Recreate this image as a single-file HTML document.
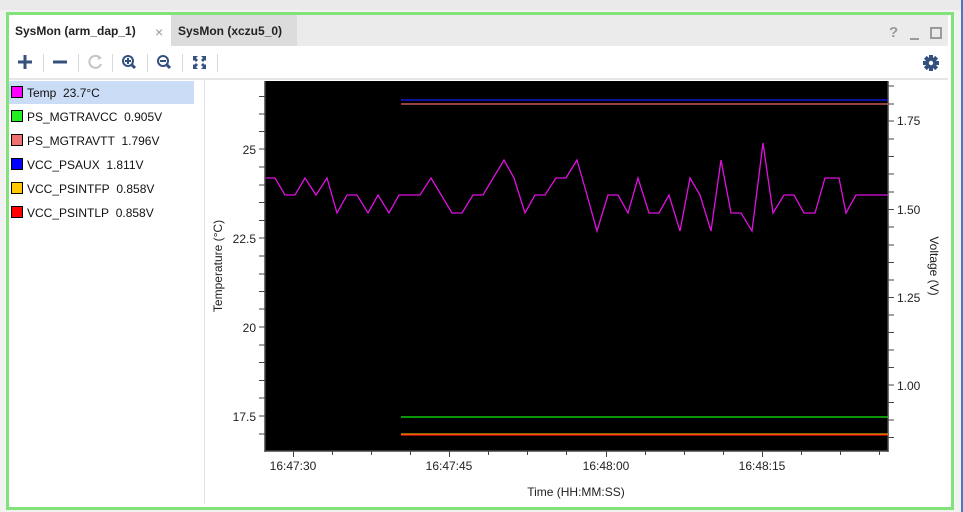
<!DOCTYPE html>
<html><head><meta charset="utf-8"><style>
html,body{margin:0;padding:0;width:963px;height:512px;overflow:hidden;background:#f2f2f2;font-family:"Liberation Sans",Arial,sans-serif;}
.a{position:absolute}
</style></head><body>
<div class="a" style="left:0;top:0;width:963px;height:10px;background:#eaeaea"></div>
<div class="a" style="left:961px;top:0;width:2px;height:512px;background:#4a78c8"></div>
<div class="a" style="left:6px;top:12px;width:942px;height:492px;border:3px solid #82e37a;background:#fff"></div>
<div class="a" style="left:9px;top:15px;width:939px;height:31px;background:#ebebeb"></div>
<div class="a" style="left:9px;top:15px;width:162px;height:31px;background:#fff"></div>
<div class="a" style="left:171px;top:15px;width:126px;height:31px;background:#dcdcdc"></div>
<div class="a" style="left:15px;top:24px;font-size:12px;font-weight:bold;color:#222">SysMon (arm_dap_1)</div>
<div class="a" style="left:155px;top:24px;font-size:14px;color:#999">×</div>
<div class="a" style="left:178px;top:24px;font-size:12px;font-weight:bold;color:#222">SysMon (xczu5_0)</div>
<div class="a" style="left:889px;top:24px;font-size:15px;font-weight:bold;color:#9a9a9a">?</div>
<div class="a" style="left:910px;top:38px;width:9px;height:2px;background:#9a9a9a"></div>
<div class="a" style="left:930px;top:27px;width:8px;height:8px;border:2px solid #9a9a9a"></div>
<div class="a" style="left:9px;top:78px;width:939px;height:2px;background:#e6e6e6"></div>
<svg class="a" style="left:0;top:0" width="963" height="512">
<g stroke="#d8d8d8" stroke-width="1">
<line x1="43.5" y1="54" x2="43.5" y2="72"/><line x1="78.5" y1="54" x2="78.5" y2="72"/><line x1="112.5" y1="54" x2="112.5" y2="72"/><line x1="147.5" y1="54" x2="147.5" y2="72"/><line x1="182.5" y1="54" x2="182.5" y2="72"/><line x1="217.5" y1="54" x2="217.5" y2="72"/>
</g>
<g stroke="#34507f" stroke-width="3" fill="none">
<line x1="18" y1="62" x2="32" y2="62"/><line x1="25" y1="55" x2="25" y2="69"/>
<line x1="53" y1="62" x2="67" y2="62"/>
</g>
<path d="M100 58 A6 6 0 1 0 101 64" stroke="#c4c4c4" stroke-width="2" fill="none"/>
<path d="M98 55 L102 58 L98 60" fill="#c4c4c4"/>
<g stroke="#34507f" stroke-width="2" fill="none">
<circle cx="128" cy="61" r="5"/><line x1="132" y1="65" x2="135" y2="68" stroke-width="3"/>
<line x1="125" y1="61" x2="131" y2="61"/><line x1="128" y1="58" x2="128" y2="64"/>
<circle cx="163" cy="61" r="5"/><line x1="167" y1="65" x2="170" y2="68" stroke-width="3"/>
<line x1="160" y1="61" x2="166" y2="61"/>
</g>
<g fill="#34507f">
<path d="M193 56h5l-2 2 2 2-2 2-2-2-1 1z"/><path d="M206 56h-5l2 2-2 2 2 2 2-2 1 1z"/>
<path d="M193 69h5l-2-2 2-2-2-2-2 2-1-1z"/><path d="M206 69h-5l2-2-2-2 2-2 2 2 1-1z"/>
</g>
<g fill="#34507f"><circle cx="931" cy="63" r="5.5"/>
<rect x="929" y="55" width="4" height="16"/><rect x="923" y="61" width="16" height="4"/>
<rect x="929" y="55" width="4" height="16" transform="rotate(45 931 63)"/><rect x="929" y="55" width="4" height="16" transform="rotate(-45 931 63)"/></g>
<circle cx="931" cy="63" r="2.2" fill="#fff"/>
<line x1="204.5" y1="80" x2="204.5" y2="504" stroke="#e2e2e2"/>
<rect x="9" y="81" width="185" height="23" fill="#cbdcf7"/>
<rect x="265" y="81" width="623" height="370" fill="#000"/>
<g stroke="#444" stroke-width="1.5">
<line x1="265" y1="81" x2="265" y2="452"/><line x1="888" y1="81" x2="888" y2="452"/><line x1="265" y1="451" x2="888" y2="451"/>
</g>
<g stroke="#444" stroke-width="1">
<path d="M259 96.5h6M259 114h6M259 131.5h6M259 149h6M259 167h6M259 185h6M259 202.5h6M259 220.5h6M259 238h6M259 256h6M259 274h6M259 291.5h6M259 309h6M259 327h6M259 345h6M259 362.5h6M259 380.5h6M259 398h6M259 416h6M259 434h6"/>
<path d="M888 86h6M888 104h6M888 121h6M888 139h6M888 156.5h6M888 174h6M888 192h6M888 209.5h6M888 227h6M888 245h6M888 262.5h6M888 280h6M888 297.5h6M888 315h6M888 332.5h6M888 350h6M888 367.5h6M888 385h6M888 402.5h6M888 420h6M888 437.5h6"/>
<path d="M293.5 451v6M332.5 451v4M371.5 451v4M410.5 451v4M449.5 451v6M488.5 451v4M527.5 451v4M566.5 451v4M606.5 451v6M645.5 451v4M684.5 451v4M723.5 451v4M762.5 451v6M801.5 451v4M840.5 451v4M879.5 451v4"/>
</g>
<line x1="401" y1="100" x2="888" y2="100" stroke="#1a1aff" stroke-width="1.2"/>
<line x1="401" y1="104" x2="888" y2="104" stroke="#f06a6a" stroke-width="1.3"/>
<line x1="401" y1="417" x2="888" y2="417" stroke="#11ee11" stroke-width="1.3"/>
<line x1="401" y1="434" x2="888" y2="434" stroke="#ffcc00" stroke-width="1"/>
<line x1="401" y1="435" x2="888" y2="435" stroke="#ff1111" stroke-width="1.3"/>
<polyline fill="none" stroke="#e010e0" stroke-width="1.3" points="266,178 275,178 285,195 295,195 305,178 316,195 327,178 337,213 347,195 357,195 368,213 378,195 389,213 399,195 420,195 431,178 452,213 462,213 473,195 483,195 504,160 514,178 525,213 535,195 545,195 556,178 566,178 577,160 587,195 597,231 608,195 618,195 628,213 638,178 649,213 659,213 669,195 680,231 690,178 700,195 711,231 721,160 731,213 741,213 752,231 763,143 773,213 784,195 794,195 804,213 815,213 825,178 839,178 846,213 856,195 888,195"/>
<g font-size="12" fill="#222" font-family="Liberation Sans,Arial,sans-serif">
<text x="256" y="154" text-anchor="end">25</text>
<text x="256" y="243" text-anchor="end">22.5</text>
<text x="256" y="332" text-anchor="end">20</text>
<text x="256" y="421" text-anchor="end">17.5</text>
<text x="897" y="125">1.75</text>
<text x="897" y="214">1.50</text>
<text x="897" y="302">1.25</text>
<text x="897" y="390">1.00</text>
<text x="293" y="470" text-anchor="middle">16:47:30</text>
<text x="449" y="470" text-anchor="middle">16:47:45</text>
<text x="606" y="470" text-anchor="middle">16:48:00</text>
<text x="762" y="470" text-anchor="middle">16:48:15</text>
<text x="576" y="496" text-anchor="middle">Time (HH:MM:SS)</text>
<text transform="translate(222 266) rotate(-90)" text-anchor="middle">Temperature (°C)</text>
<text transform="translate(930 266) rotate(90)" text-anchor="middle">Voltage (V)</text>
</g>
</svg>
<div class="a" style="left:11px;top:81px;font-size:12px;color:#111;line-height:24px">
<div><span style="display:inline-block;width:10px;height:10px;border:1px solid #000;background:#ff00ff;vertical-align:-1px;margin-right:4px"></span>Temp&nbsp; 23.7°C</div>
<div><span style="display:inline-block;width:10px;height:10px;border:1px solid #000;background:#22ee22;vertical-align:-1px;margin-right:4px"></span>PS_MGTRAVCC&nbsp; 0.905V</div>
<div><span style="display:inline-block;width:10px;height:10px;border:1px solid #000;background:#f07070;vertical-align:-1px;margin-right:4px"></span>PS_MGTRAVTT&nbsp; 1.796V</div>
<div><span style="display:inline-block;width:10px;height:10px;border:1px solid #000;background:#0000ff;vertical-align:-1px;margin-right:4px"></span>VCC_PSAUX&nbsp; 1.811V</div>
<div><span style="display:inline-block;width:10px;height:10px;border:1px solid #000;background:#ffc800;vertical-align:-1px;margin-right:4px"></span>VCC_PSINTFP&nbsp; 0.858V</div>
<div><span style="display:inline-block;width:10px;height:10px;border:1px solid #000;background:#ff0000;vertical-align:-1px;margin-right:4px"></span>VCC_PSINTLP&nbsp; 0.858V</div>
</div>
</body></html>
